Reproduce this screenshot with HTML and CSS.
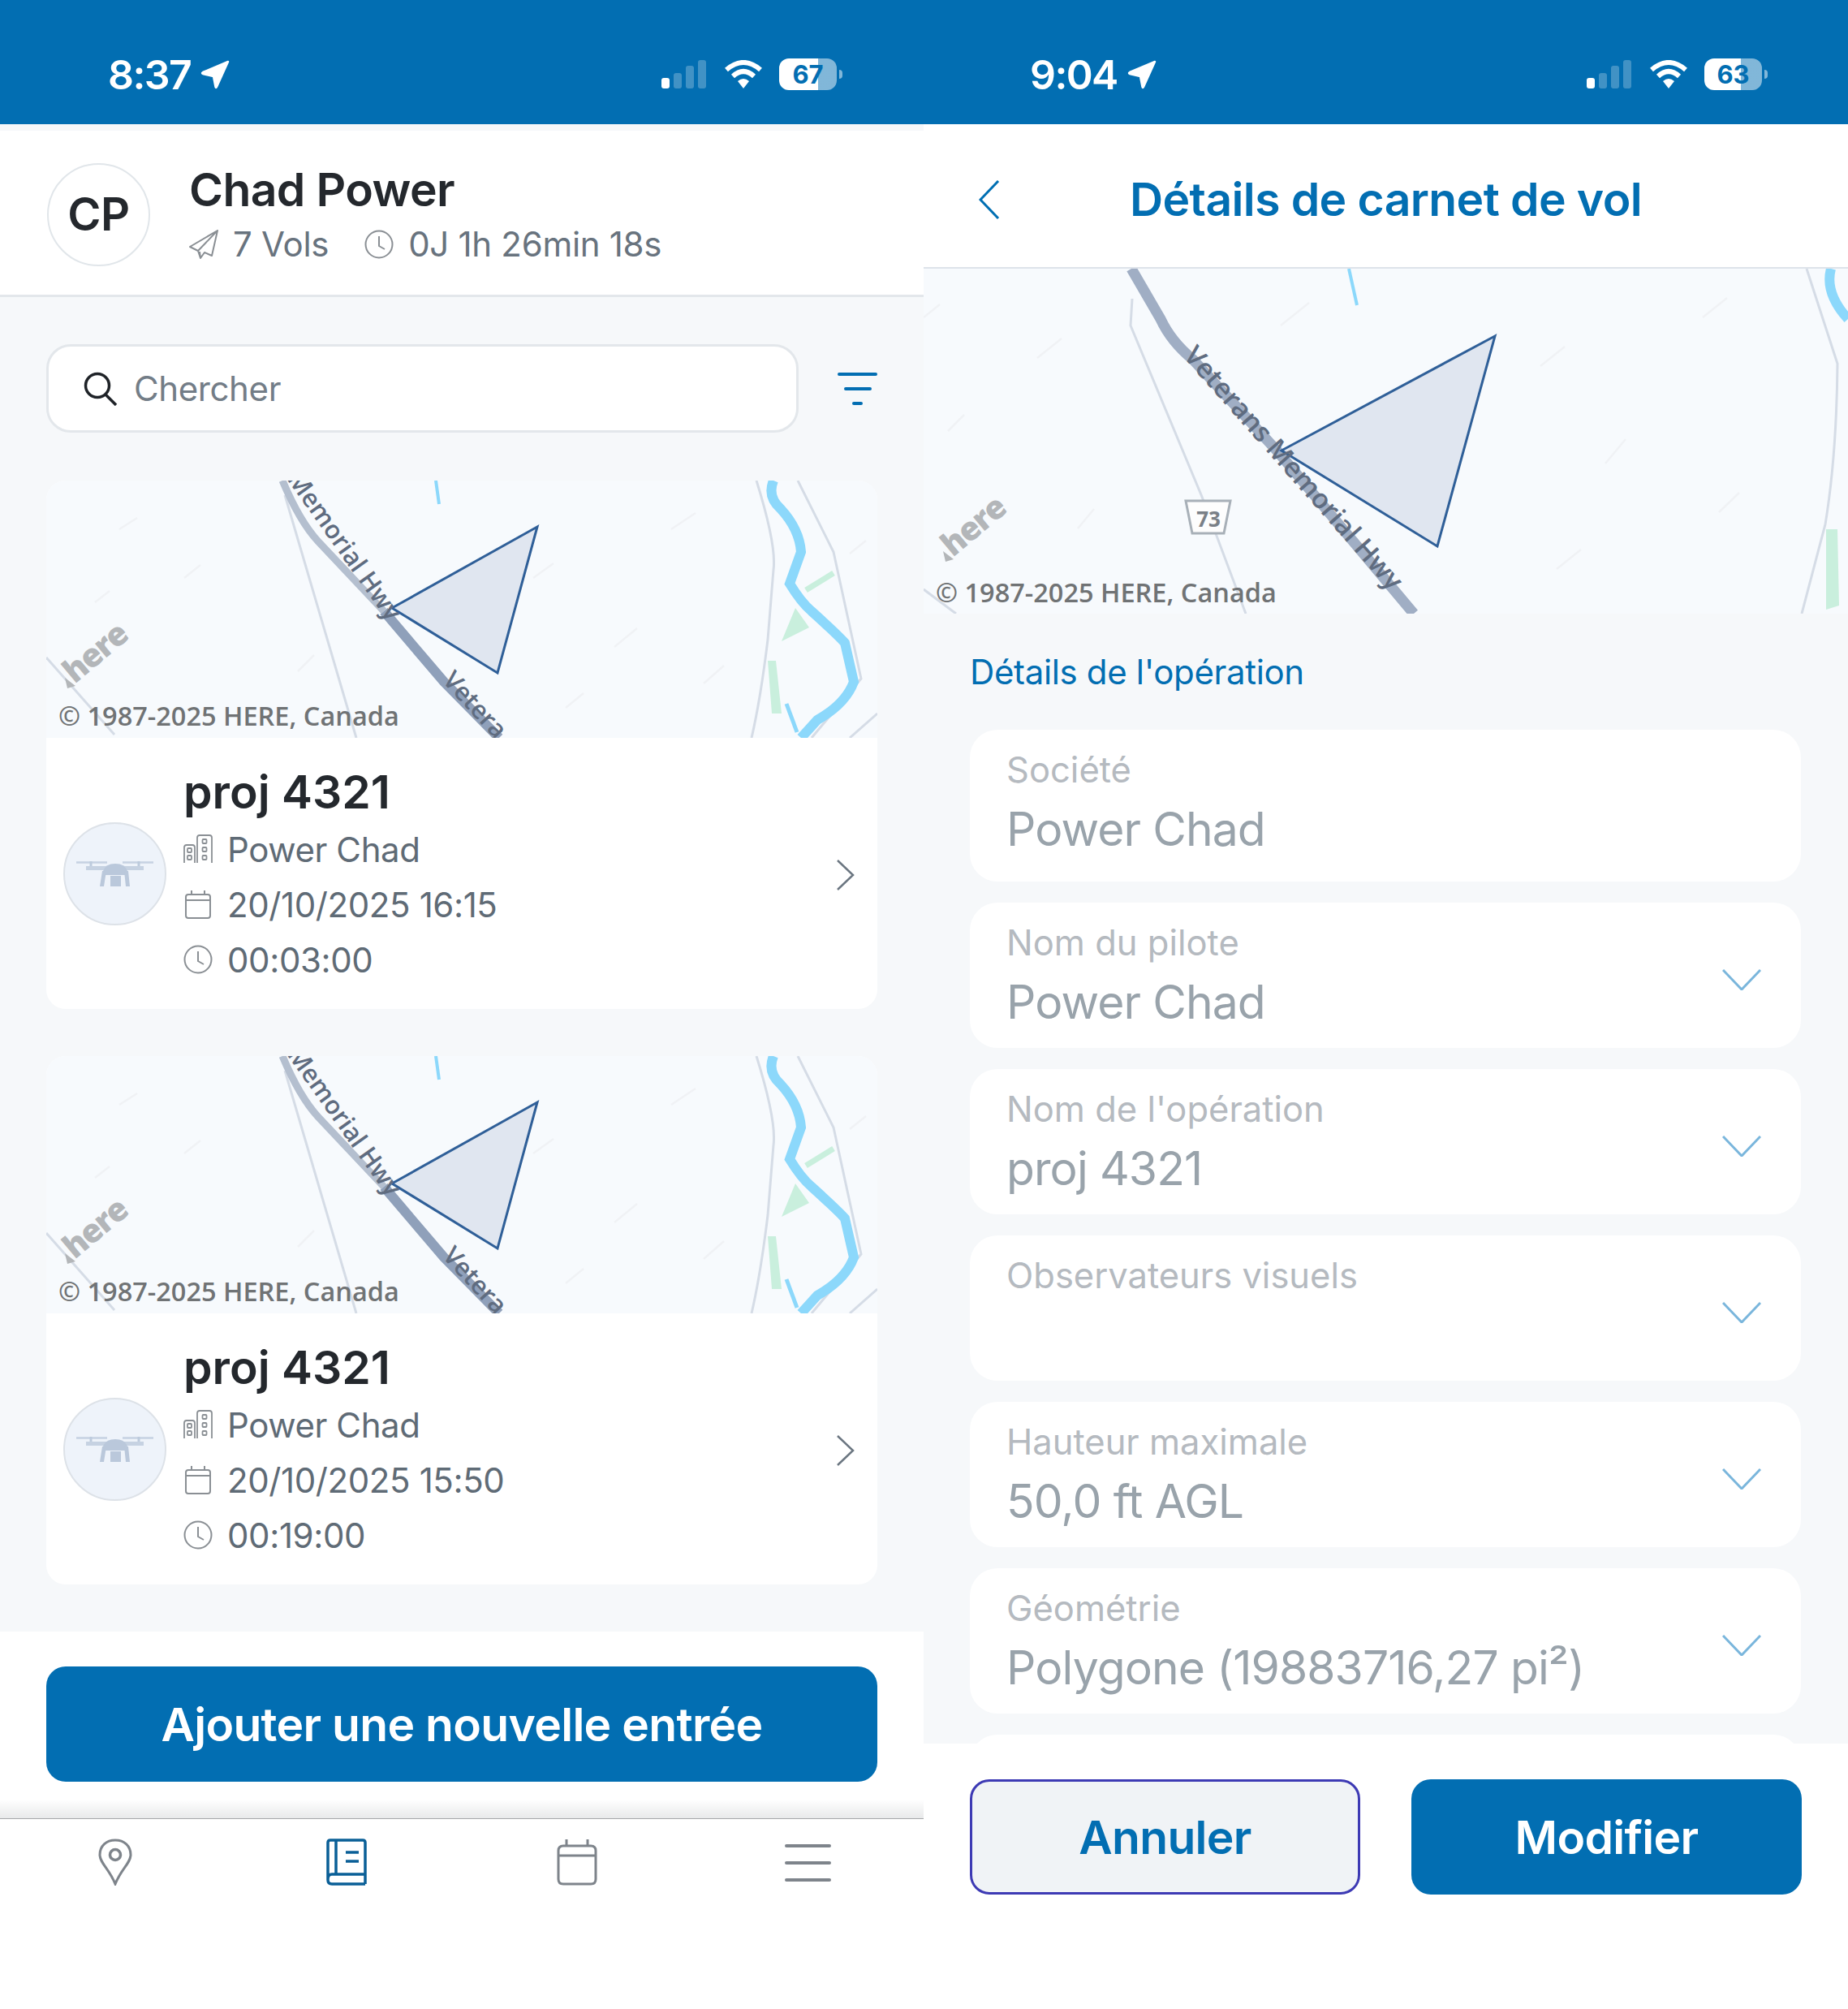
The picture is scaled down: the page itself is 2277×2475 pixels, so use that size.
FILE: index.html
```html
<!DOCTYPE html>
<html lang="fr">
<head>
    <meta charset="UTF-8">
    <meta name="viewport" content="width=device-width, initial-scale=1.0">
    <title>Carnet de vol</title>
    <link rel="stylesheet" href="styles.css">
</head>
<body>
    <svg class="sprite" xmlns="http://www.w3.org/2000/svg">
        <symbol id="i-arrow" viewBox="0 0 36 36">
            <path d="M34 2 L20 33 Q19 35 18.500 33 L16 20 L3 17 Q1 16 3 15 Z" fill="#fff" stroke="#fff" stroke-width="2.500" stroke-linejoin="round"/>
        </symbol>
        <symbol id="i-wifi" viewBox="0 0 48 36">
            <path d="M3 12 Q24 -6 45 12 M11 20 Q24 8 37 20" fill="none" stroke="#fff" stroke-width="6"/>
            <path d="M17 26 Q24 20 31 26 L24 35 Z" fill="#fff"/>
        </symbol>
        <symbol id="i-plane" viewBox="0 0 36 36">
            <path d="M35 1 L1 21 L11 26 Z M35 1 L11 26 L14 35 L19 28 L28 32 Z M14 35 L13 27" fill="none" stroke="#8a8f94" stroke-width="2" stroke-linejoin="round"/>
        </symbol>
        <symbol id="i-clock" viewBox="0 0 36 36">
            <circle cx="18" cy="18" r="16.500" fill="none" stroke="#8a8f94" stroke-width="2"/>
            <path d="M18 8 V20 L25 24" fill="none" stroke="#8a8f94" stroke-width="2"/>
        </symbol>
        <symbol id="i-building" viewBox="0 0 36 36">
            <g fill="none" stroke="#8a8f94" stroke-width="1.800">
                <path d="M1 35 V16 Q1 13 4 13 H11 Q14 13 14 16 V35"/>
                <path d="M17 35 V4 Q17 1 20 1 H32 Q35 1 35 4 V35"/>
                <rect x="5" y="17" width="5" height="5" rx="1"/>
                <rect x="5" y="26" width="5" height="5" rx="1"/>
                <rect x="23.500" y="6" width="5" height="5" rx="1"/>
                <rect x="23.500" y="16" width="5" height="5" rx="1"/>
                <rect x="23.500" y="26" width="5" height="5" rx="1"/>
            </g>
        </symbol>
        <symbol id="i-calendar" viewBox="0 0 36 36">
            <path d="M10 1 V7 M26 1 V7 M3 13 H33 M6 6 H30 Q33 6 33 9 V32 Q33 35 30 35 H6 Q3 35 3 32 V9 Q3 6 6 6 Z" fill="none" stroke="#8a8f94" stroke-width="2"/>
        </symbol>
        <symbol id="i-drone" viewBox="0 0 95 34">
            <path d="M0 3.500 H38 M57 3.500 H95" stroke="#c6d2e2" stroke-width="2.500"/>
            <path d="M18 2 V10 M77 2 V10" stroke="#bdcbdd" stroke-width="3"/>
            <path d="M12 8 H83 V13 H12 Z" fill="#c6d2e2"/>
            <path d="M33 14 Q36 5 48 5 Q60 5 63 14 L62 19 H34 Z" fill="#bac8db"/>
            <path d="M32 14 H37 L34 33 H29 Z M59 14 H64 L66 33 H61 Z M42 20 H55 V33 H42 Z" fill="#bac8db"/>
        </symbol>
        <symbol id="i-right" viewBox="0 0 22 38">
            <path d="M1 1 L20 19 L1 37" fill="none" stroke="#6b7681" stroke-width="2.500"/>
        </symbol>
        <symbol id="i-down" viewBox="0 0 48 26">
            <path d="M1 1 L24 25 L47 1" fill="none" stroke="#7ab6dc" stroke-width="3"/>
        </symbol>

        <symbol id="map-small" viewBox="0 0 1024 317">
            <g fill="none" stroke="#f0f2f5" stroke-width="2.500">
                <path d="M90 60 L112 46 M170 120 L190 104 M310 235 L330 215 M600 120 L625 102 M700 205 L728 182 M770 60 L800 40 M640 280 L662 262 M810 250 L835 228 M60 150 L78 136 M990 90 L1010 74"/>
            </g>
            <g fill="none" stroke="#d5dce6" stroke-width="3">
                <path d="M294 18 L382 317"/>
                <path d="M0 218 L84 313"/>
                <path d="M875 0 Q900 80 896 110 L889 196 Q880 270 869 317"/>
                <path d="M926 0 L970 88 L1004 244 L943 317"/>
                <path d="M1024 287 L990 317"/>
            </g>
            <path d="M291 0 Q312 50 335 75 L416 161" fill="none" stroke="#b4bfcf" stroke-width="9"/>
            <path d="M416 161 L490 248 L558 317" fill="none" stroke="#8fa0ba" stroke-width="12"/>
            <path d="M480 0 L484 29" fill="none" stroke="#8cd8fb" stroke-width="4"/>
            <path d="M896 0 Q888 20 905 35 Q928 60 930 88 L916 127 Q930 150 943 161 Q975 190 984 200 L995 248 Q985 275 950 295 L930 317" fill="none" stroke="#8cd8fb" stroke-width="12"/>
            <path d="M912 275 L925 310" fill="none" stroke="#8cd8fb" stroke-width="5"/>
            <path d="M936 135 L970 114" fill="none" stroke="#c9efdd" stroke-width="7"/>
            <path d="M923 157 L940 181 L906 198 Z M889 222 H899 L906 287 H894 Z" fill="#c9efdd"/>
            <path d="M605 57 L426 157 L556 237 Z" fill="#e0e6f0" stroke="#2f5f98" stroke-width="3"/>
            <path id="label-memorial" d="M296 -2 L428 184" fill="none"/>
            <path id="label-vetera" d="M487 247 L556 322" fill="none"/>
            <text class="map-road"><textPath href="#label-memorial">Memorial Hwy</textPath></text>
            <text class="map-road"><textPath href="#label-vetera">Vetera</textPath></text>
            <path d="M23 243 L36 253 L26 256 Z" fill="#b3b6b9"/>
            <text class="map-here" transform="translate(35 251) rotate(-40)">here</text>
            <text class="map-copy" x="15" y="302">© 1987-2025 HERE, Canada</text>
        </symbol>
        <symbol id="map-large" viewBox="0 0 1139 425">
            <g fill="none" stroke="#f0f2f5" stroke-width="2.500">
                <path d="M0 60 L20 44 M140 110 L170 86 M440 70 L475 42 M600 240 L630 212 M760 120 L790 96 M840 240 L865 210 M960 60 L990 36 M780 370 L810 346 M190 320 L210 296 M980 300 L1005 276 M30 200 L50 180"/>
            </g>
            <g fill="none" stroke="#d5dce6" stroke-width="3">
                <path d="M257 37 L255 70 L343 281 L397 425"/>
                <path d="M1088 0 L1126 117 Q1125 230 1111 315 L1082 425"/>
                <path d="M0 395 L40 425"/>
            </g>
            <path d="M256 0 L292 62 Q305 90 332 112 L437 226 L604 425" fill="none" stroke="#a0aec4" stroke-width="13"/>
            <path d="M524 0 L534 45" fill="none" stroke="#8cd8fb" stroke-width="4"/>
            <path d="M1118 0 Q1110 30 1139 62" fill="none" stroke="#8cd8fb" stroke-width="12"/>
            <path d="M1112 321 L1126 321 L1128 415 L1112 420 Z" fill="#c9efdd"/>
            <path d="M704 83 L441 224 L633 342 Z" fill="#e0e6f0" stroke="#2f5f98" stroke-width="3"/>
            <path id="label-veterans" d="M319 108 L586 410" fill="none"/>
            <text class="map-road map-road-large"><textPath href="#label-veterans">Veterans Memorial Hwy</textPath></text>
            <path d="M323 286 H378 L370 326 H331 Z" fill="#fdfdfd" stroke="#a8b0b8" stroke-width="3"/>
            <text class="map-shield" x="351" y="318">73</text>
            <path d="M24 348 L37 358 L27 361 Z" fill="#b3b6b9"/>
            <text class="map-here" transform="translate(36 356) rotate(-40)">here</text>
            <text class="map-copy" x="15" y="411">© 1987-2025 HERE, Canada</text>
        </symbol>
    </svg>

    <div class="screens">
        <section class="screen">
            <div class="status-bar">
                <div class="status-time">
                    <span>8:37</span>
                    <svg class="status-arrow"><use href="#i-arrow"/></svg>
                </div>
                <div class="status-icons">
                    <div class="signal"><i class="on"></i><i></i><i></i><i></i></div>
                    <svg class="status-wifi"><use href="#i-wifi"/></svg>
                    <div class="battery" style="--level:67%">67</div>
                    <div class="battery-nub"></div>
                </div>
            </div>

            <div class="content">
                <div class="profile">
                    <div class="avatar">CP</div>
                    <div>
                        <div class="profile-name">Chad Power</div>
                        <div class="profile-stats">
                            <svg class="stat-icon"><use href="#i-plane"/></svg>
                            <span class="stat-text">7 Vols</span>
                            <svg class="stat-icon"><use href="#i-clock"/></svg>
                            <span>0J 1h 26min 18s</span>
                        </div>
                    </div>
                </div>

                <div class="list">
                    <div class="search-row">
                        <div class="search">
                            <svg class="search-icon" viewBox="0 0 42 42"><circle cx="17" cy="17" r="14.500" fill="none" stroke="#1f2328" stroke-width="3.500"/><path d="M27 28 L40 41" stroke="#1f2328" stroke-width="3.500"/></svg>
                            <span>Chercher</span>
                        </div>
                        <div class="filter"><i></i><i></i><i></i></div>
                    </div>

                    <article class="card">
                        <svg class="card-map"><use href="#map-small"/></svg>
                        <div class="card-body">
                            <div class="drone"><svg class="drone-icon"><use href="#i-drone"/></svg></div>
                            <div class="card-info">
                                <h3 class="card-title">proj 4321</h3>
                                <div class="card-row"><svg class="row-icon"><use href="#i-building"/></svg>Power Chad</div>
                                <div class="card-row"><svg class="row-icon"><use href="#i-calendar"/></svg>20/10/2025 16:15</div>
                                <div class="card-row"><svg class="row-icon"><use href="#i-clock"/></svg>00:03:00</div>
                            </div>
                            <svg class="card-chevron"><use href="#i-right"/></svg>
                        </div>
                    </article>

                    <article class="card">
                        <svg class="card-map"><use href="#map-small"/></svg>
                        <div class="card-body">
                            <div class="drone"><svg class="drone-icon"><use href="#i-drone"/></svg></div>
                            <div class="card-info">
                                <h3 class="card-title">proj 4321</h3>
                                <div class="card-row"><svg class="row-icon"><use href="#i-building"/></svg>Power Chad</div>
                                <div class="card-row"><svg class="row-icon"><use href="#i-calendar"/></svg>20/10/2025 15:50</div>
                                <div class="card-row"><svg class="row-icon"><use href="#i-clock"/></svg>00:19:00</div>
                            </div>
                            <svg class="card-chevron"><use href="#i-right"/></svg>
                        </div>
                    </article>
                </div>

                <div class="add-bar">
                    <button class="btn btn-primary btn-wide">Ajouter une nouvelle entrée</button>
                </div>
                <nav class="tabbar">
                    <svg class="tab-icon" viewBox="0 0 42 58"><path d="M21 56 C14 38 2 30 2 20 C2 9 10 2 21 2 C32 2 40 9 40 20 C40 30 28 38 21 56 Z" fill="none" stroke="#7e848b" stroke-width="3"/><circle cx="21" cy="20" r="6.500" fill="none" stroke="#7e848b" stroke-width="3.500"/></svg>
                    <svg class="tab-icon" viewBox="0 0 50 58"><path d="M48 44 V5 Q48 2 45 2 H5 Q2 2 2 5 V51 Q2 56 7 56 H48 M2 50 Q2 44 7 44 H48 V56 M12 2 V44 M24 17 H40 M24 28 H40" fill="none" stroke="#0a5f97" stroke-width="3.500"/></svg>
                    <svg class="tab-icon" viewBox="0 0 50 58"><path d="M12 1 V10 M38 1 V10 M2 21 H48 M8 9 H42 Q48 9 48 15 V50 Q48 56 42 56 H8 Q2 56 2 50 V15 Q2 9 8 9 Z" fill="none" stroke="#7e848b" stroke-width="3"/></svg>
                    <div class="tab-menu"><i></i><i></i><i></i></div>
                </nav>
            </div>
        </section>

        <section class="screen">
            <div class="status-bar status-bar-right">
                <div class="status-time">
                    <span>9:04</span>
                    <svg class="status-arrow"><use href="#i-arrow"/></svg>
                </div>
                <div class="status-icons">
                    <div class="signal"><i class="on"></i><i></i><i></i><i></i></div>
                    <svg class="status-wifi"><use href="#i-wifi"/></svg>
                    <div class="battery" style="--level:63%">63</div>
                    <div class="battery-nub"></div>
                </div>
            </div>

            <div class="content">
                <header class="page-header">
                    <svg class="back" viewBox="0 0 26 48"><path d="M24 1 L2 24 L24 47" fill="none" stroke="#006fb3" stroke-width="3"/></svg>
                    <h1 class="page-title">Détails de carnet de vol</h1>
                </header>
                <svg class="detail-map"><use href="#map-large"/></svg>

                <div class="form">
                    <h2 class="form-heading">Détails de l'opération</h2>
                    <div class="field field-tall">
                        <div>
                            <div class="field-label">Société</div>
                            <div class="field-value">Power Chad</div>
                        </div>
                    </div>
                    <div class="field">
                        <div>
                            <div class="field-label">Nom du pilote</div>
                            <div class="field-value">Power Chad</div>
                        </div>
                        <svg class="field-chevron"><use href="#i-down"/></svg>
                    </div>
                    <div class="field">
                        <div>
                            <div class="field-label">Nom de l'opération</div>
                            <div class="field-value">proj 4321</div>
                        </div>
                        <svg class="field-chevron"><use href="#i-down"/></svg>
                    </div>
                    <div class="field">
                        <div>
                            <div class="field-label">Observateurs visuels</div>
                            <div class="field-value">&nbsp;</div>
                        </div>
                        <svg class="field-chevron"><use href="#i-down"/></svg>
                    </div>
                    <div class="field">
                        <div>
                            <div class="field-label">Hauteur maximale</div>
                            <div class="field-value">50,0 ft AGL</div>
                        </div>
                        <svg class="field-chevron"><use href="#i-down"/></svg>
                    </div>
                    <div class="field">
                        <div>
                            <div class="field-label">Géométrie</div>
                            <div class="field-value">Polygone (19883716,27 pi²)</div>
                        </div>
                        <svg class="field-chevron"><use href="#i-down"/></svg>
                    </div>
                    <div class="field"></div>
                </div>

                <div class="actions">
                    <button class="btn btn-secondary">Annuler</button>
                    <button class="btn btn-primary">Modifier</button>
                </div>
            </div>
        </section>
    </div>
</body>
</html>
```

FILE: styles.css
```css
* {
    box-sizing: border-box;
    margin: 0;
    padding: 0;
}

body {
    font-family: Inter, "Liberation Sans", sans-serif;
    background-color: #fff;
    color: #24282d;
}

.sprite {
    display: none;
}

.screens {
    display: grid;
    grid-template-columns: 1138px 1139px;
    height: 2475px;
}

.screen {
    min-width: 0;
    min-height: 0;
    display: flex;
    flex-direction: column;
}

/* status bar */

.status-bar {
    flex: none;
    height: 153px;
    background-color: #026eb2;
    color: #fff;
    display: flex;
    justify-content: space-between;
    align-items: center;
    padding: 30px 100px 0 133px;
}

.status-bar-right {
    padding-left: 131px;
    padding-right: 99px;
}

.status-time {
    display: flex;
    align-items: center;
    gap: 12px;
    font-size: 50px;
    font-weight: 600;
    letter-spacing: -1.6px;
}

.status-arrow {
    width: 36px;
    height: 36px;
}

.status-icons {
    display: flex;
    align-items: center;
}

.signal {
    display: flex;
    align-items: flex-end;
    gap: 5px;
    height: 35px;
    margin-right: 22px;
}

.signal i {
    width: 10px;
    background-color: rgba(255, 255, 255, 0.25);
    border-radius: 3px;
}

.signal i:nth-child(1) { height: 13px; }
.signal i:nth-child(2) { height: 19px; }
.signal i:nth-child(3) { height: 28px; }
.signal i:nth-child(4) { height: 35px; }

.signal i.on {
    background-color: #fff;
}

.status-wifi {
    width: 48px;
    height: 36px;
    margin-right: 20px;
}

.battery {
    width: 71px;
    height: 39px;
    border-radius: 12px;
    background: linear-gradient(to right, #fff var(--level), rgba(255, 255, 255, 0.5) var(--level));
    color: #026eb2;
    font-size: 31px;
    font-weight: 700;
    line-height: 39px;
    text-align: center;
}

.battery-nub {
    width: 4px;
    height: 11px;
    margin-left: 3px;
    background-color: rgba(255, 255, 255, 0.5);
    border-radius: 0 6px 6px 0;
}

.content {
    flex: 1;
    min-height: 0;
    display: flex;
    flex-direction: column;
    background-color: #f6f8fa;
}

/* left screen */

.profile {
    flex: none;
    height: 205px;
    margin-top: 8px;
    background-color: #fff;
    border-bottom: 3px solid #e3e7eb;
    display: flex;
    align-items: center;
    gap: 48px;
    padding: 4px 58px 0;
}

.avatar {
    width: 127px;
    height: 127px;
    border-radius: 50%;
    border: 2px solid #e1e6ea;
    display: flex;
    justify-content: center;
    align-items: center;
    font-size: 56px;
    font-weight: 600;
    letter-spacing: -0.5px;
}

.profile-name {
    font-size: 57px;
    font-weight: 600;
    line-height: 66px;
    letter-spacing: -0.6px;
}

.profile-stats {
    display: flex;
    align-items: center;
    font-size: 42px;
    line-height: 52px;
    letter-spacing: -0.3px;
    color: #68737e;
    margin-top: 8px;
}

.stat-icon {
    width: 36px;
    height: 36px;
    margin-right: 18px;
}

.stat-text {
    margin-right: 44px;
}

.list {
    flex: 1;
    padding: 58px 57px 0;
}

.search-row {
    display: flex;
    align-items: center;
    justify-content: space-between;
    margin-bottom: 59px;
}

.search {
    width: 927px;
    height: 109px;
    background-color: #fff;
    border: 3px solid #e3e7eb;
    border-radius: 30px;
    display: flex;
    align-items: center;
    gap: 20px;
    padding-left: 43px;
    font-size: 42px;
    letter-spacing: -0.4px;
    color: #737d87;
}

.search-icon {
    width: 42px;
    height: 42px;
}

.filter {
    width: 49px;
    display: flex;
    flex-direction: column;
    align-items: center;
    gap: 14px;
}

.filter i {
    height: 4px;
    border-radius: 2px;
    background-color: #026eb2;
}

.filter i:nth-child(1) { width: 49px; }
.filter i:nth-child(2) { width: 34px; }
.filter i:nth-child(3) { width: 13px; }

.card {
    height: 651px;
    margin-bottom: 58px;
    background-color: #fff;
    border-radius: 24px;
    overflow: hidden;
}

.card-map {
    display: block;
    width: 1024px;
    height: 317px;
    background-color: #f7fafd;
}

.card-body {
    height: 334px;
    display: flex;
    align-items: center;
    padding: 0 28px 0 21px;
}

.drone {
    flex: none;
    width: 127px;
    height: 127px;
    margin-right: 21px;
    border-radius: 50%;
    background-color: #eef3fa;
    border: 2.500px solid #dde2e8;
    display: flex;
    justify-content: center;
    align-items: center;
}

.drone-icon {
    width: 95px;
    height: 34px;
}

.card-info {
    flex: 1;
}

.card-title {
    font-size: 57px;
    font-weight: 600;
    line-height: 68px;
    padding-top: 6px;
    margin-bottom: 2px;
}

.card-row {
    display: flex;
    align-items: center;
    gap: 18px;
    height: 68px;
    font-size: 42px;
    letter-spacing: -0.4px;
    color: #5f6b76;
}

.row-icon {
    width: 36px;
    height: 36px;
}

.card-chevron {
    width: 22px;
    height: 38px;
    margin-top: 4px;
}

.add-bar {
    flex: none;
    height: 231px;
    padding: 43px 57px 0;
    background: linear-gradient(to bottom, #fff 207px, #e8e9ea 230px, #a5a7a9 230px);
}

.btn {
    height: 142px;
    border: none;
    border-radius: 24px;
    font-family: inherit;
    font-size: 57px;
    font-weight: 600;
    letter-spacing: -0.7px;
    cursor: pointer;
}

.btn-wide {
    width: 100%;
}

.btn-primary {
    background-color: #026eb2;
    color: #fff;
}

.btn-secondary {
    background-color: #f0f3f6;
    border: 3px solid #3d3ab4;
    color: #026eb2;
}

.tabbar {
    flex: none;
    height: 237px;
    background-color: #fff;
    display: grid;
    grid-template-columns: repeat(4, 1fr);
    justify-items: center;
    align-items: start;
    padding-top: 24px;
}

.tab-icon {
    height: 58px;
    width: 50px;
}

.tab-menu {
    display: flex;
    flex-direction: column;
    gap: 17px;
    padding-top: 7px;
}

.tab-menu i {
    display: block;
    width: 57px;
    height: 4px;
    border-radius: 2px;
    background-color: #7e848b;
}

/* right screen */

.page-header {
    flex: none;
    height: 178px;
    background-color: #fff;
    border-bottom: 2px solid #dde3ea;
    display: grid;
    grid-template-columns: 1fr auto 1fr;
    align-items: center;
    padding: 9px 0 0 68px;
}

.back {
    width: 26px;
    height: 48px;
}

.page-title {
    font-size: 57px;
    font-weight: 600;
    letter-spacing: -0.6px;
    color: #026eb2;
    margin-right: 68px;
}

.detail-map {
    flex: none;
    display: block;
    width: 100%;
    height: 425px;
    background-color: #f7fafd;
}

.form {
    flex: 1;
    min-height: 0;
    overflow: hidden;
    padding: 46px 58px 0 57px;
    display: flex;
    flex-direction: column;
    gap: 26px;
}

.form-heading {
    flex: none;
    font-size: 42px;
    font-weight: 400;
    line-height: 52px;
    letter-spacing: -0.35px;
    color: #026eb2;
    margin-bottom: 19px;
}

.field {
    flex: none;
    height: 179px;
    padding: 21px 49px 0 45px;
    background-color: #fff;
    border-radius: 34px;
    display: flex;
    justify-content: space-between;
    align-items: flex-start;
}

.field-tall {
    height: 187px;
}

.field-label {
    font-size: 43.500px;
    line-height: 56px;
    color: #b5bac0;
}

.field-value {
    font-size: 57px;
    line-height: 76px;
    letter-spacing: -0.9px;
    margin-top: 8px;
    color: #99a3ab;
}

.field-chevron {
    width: 48px;
    height: 26px;
    margin-top: 61px;
}

.actions {
    flex: none;
    height: 327px;
    background-color: #fff;
    display: grid;
    grid-template-columns: 1fr 1fr;
    gap: 63px;
    align-items: start;
    padding: 44px 57px 0;
}

/* map labels */

.map-road {
    font-family: "Open Sans", sans-serif;
    font-size: 31px;
    font-weight: 600;
    fill: #5f6c80;
}

.map-road-large {
    font-size: 33.500px;
}

.map-here {
    font-family: "Open Sans", sans-serif;
    font-size: 40px;
    font-weight: 800;
    letter-spacing: -1.5px;
    fill: #b3b6b9;
}

.map-copy {
    font-family: "Open Sans", sans-serif;
    font-size: 32.500px;
    font-weight: 600;
    fill: #707375;
}

.map-shield {
    font-family: "Open Sans", sans-serif;
    font-size: 26px;
    font-weight: 700;
    fill: #7a8087;
    text-anchor: middle;
}
```
